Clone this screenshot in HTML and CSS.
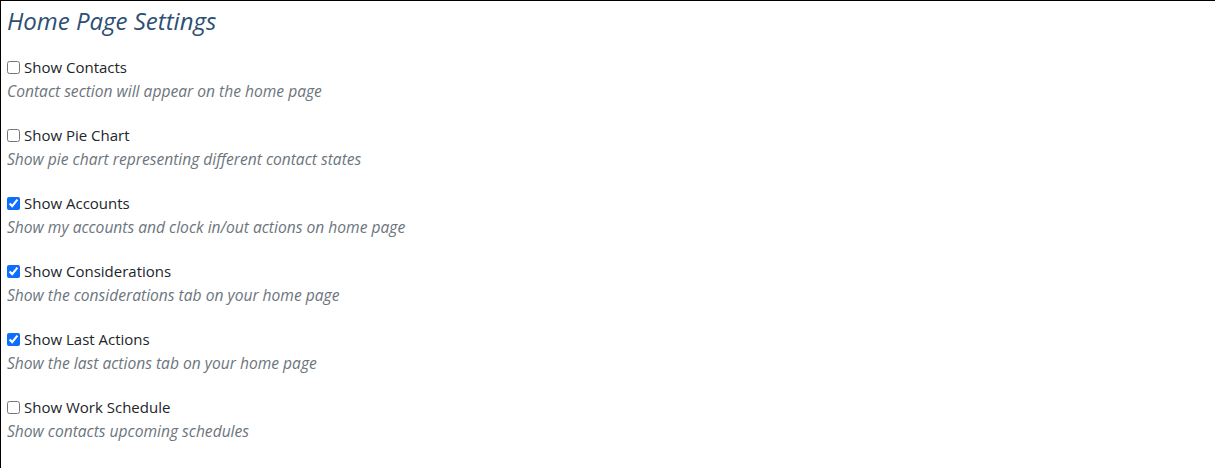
FILE: index.html
```html
<!DOCTYPE html>
<html lang="en">
<head>
    <meta charset="UTF-8">
    <meta name="viewport" content="width=device-width, initial-scale=1.0">
    <title>Home Page Settings</title>
    <link rel="stylesheet" href="styles.css">
</head>
<body>
    <div class="settings">
        <h2>Home Page Settings</h2>

        <div class="setting">
            <label><input type="checkbox"> Show Contacts</label>
            <div class="hint">Contact section will appear on the home page</div>
        </div>

        <div class="setting">
            <label><input type="checkbox"> Show Pie Chart</label>
            <div class="hint">Show pie chart representing different contact states</div>
        </div>

        <div class="setting">
            <label><input type="checkbox" checked> Show Accounts</label>
            <div class="hint">Show my accounts and clock in/out actions on home page</div>
        </div>

        <div class="setting">
            <label><input type="checkbox" checked> Show Considerations</label>
            <div class="hint">Show the considerations tab on your home page</div>
        </div>

        <div class="setting">
            <label><input type="checkbox" checked> Show Last Actions</label>
            <div class="hint">Show the last actions tab on your home page</div>
        </div>

        <div class="setting">
            <label><input type="checkbox"> Show Work Schedule</label>
            <div class="hint">Show contacts upcoming schedules</div>
        </div>
    </div>
</body>
</html>
```

FILE: styles.css
```css
html, body {
    height: 100%;
}

body {
    margin: 0;
    font-family: "Open Sans", "Noto Sans", sans-serif;
    font-size: 15px;
    color: #212529;
    background-color: #fff;
    border-top: 1px solid #000;
    border-left: 1px solid #000;
    box-sizing: border-box;
}

.settings {
    padding: 0 6px;
}

h2 {
    margin: 5px 0 19px;
    font-size: 24px;
    font-weight: normal;
    font-style: italic;
    color: #2c4f73;
    line-height: 30px;
}

.setting {
    margin-bottom: 20px;
}

label {
    display: flex;
    align-items: center;
    gap: 4px;
    line-height: 24px;
}

input[type="checkbox"] {
    margin: 0;
    width: 13px;
    height: 13px;
    accent-color: #0d6efd;
}

.hint {
    font-size: 15.6px;
    font-style: italic;
    color: #6c757d;
    line-height: 24px;
}
```
